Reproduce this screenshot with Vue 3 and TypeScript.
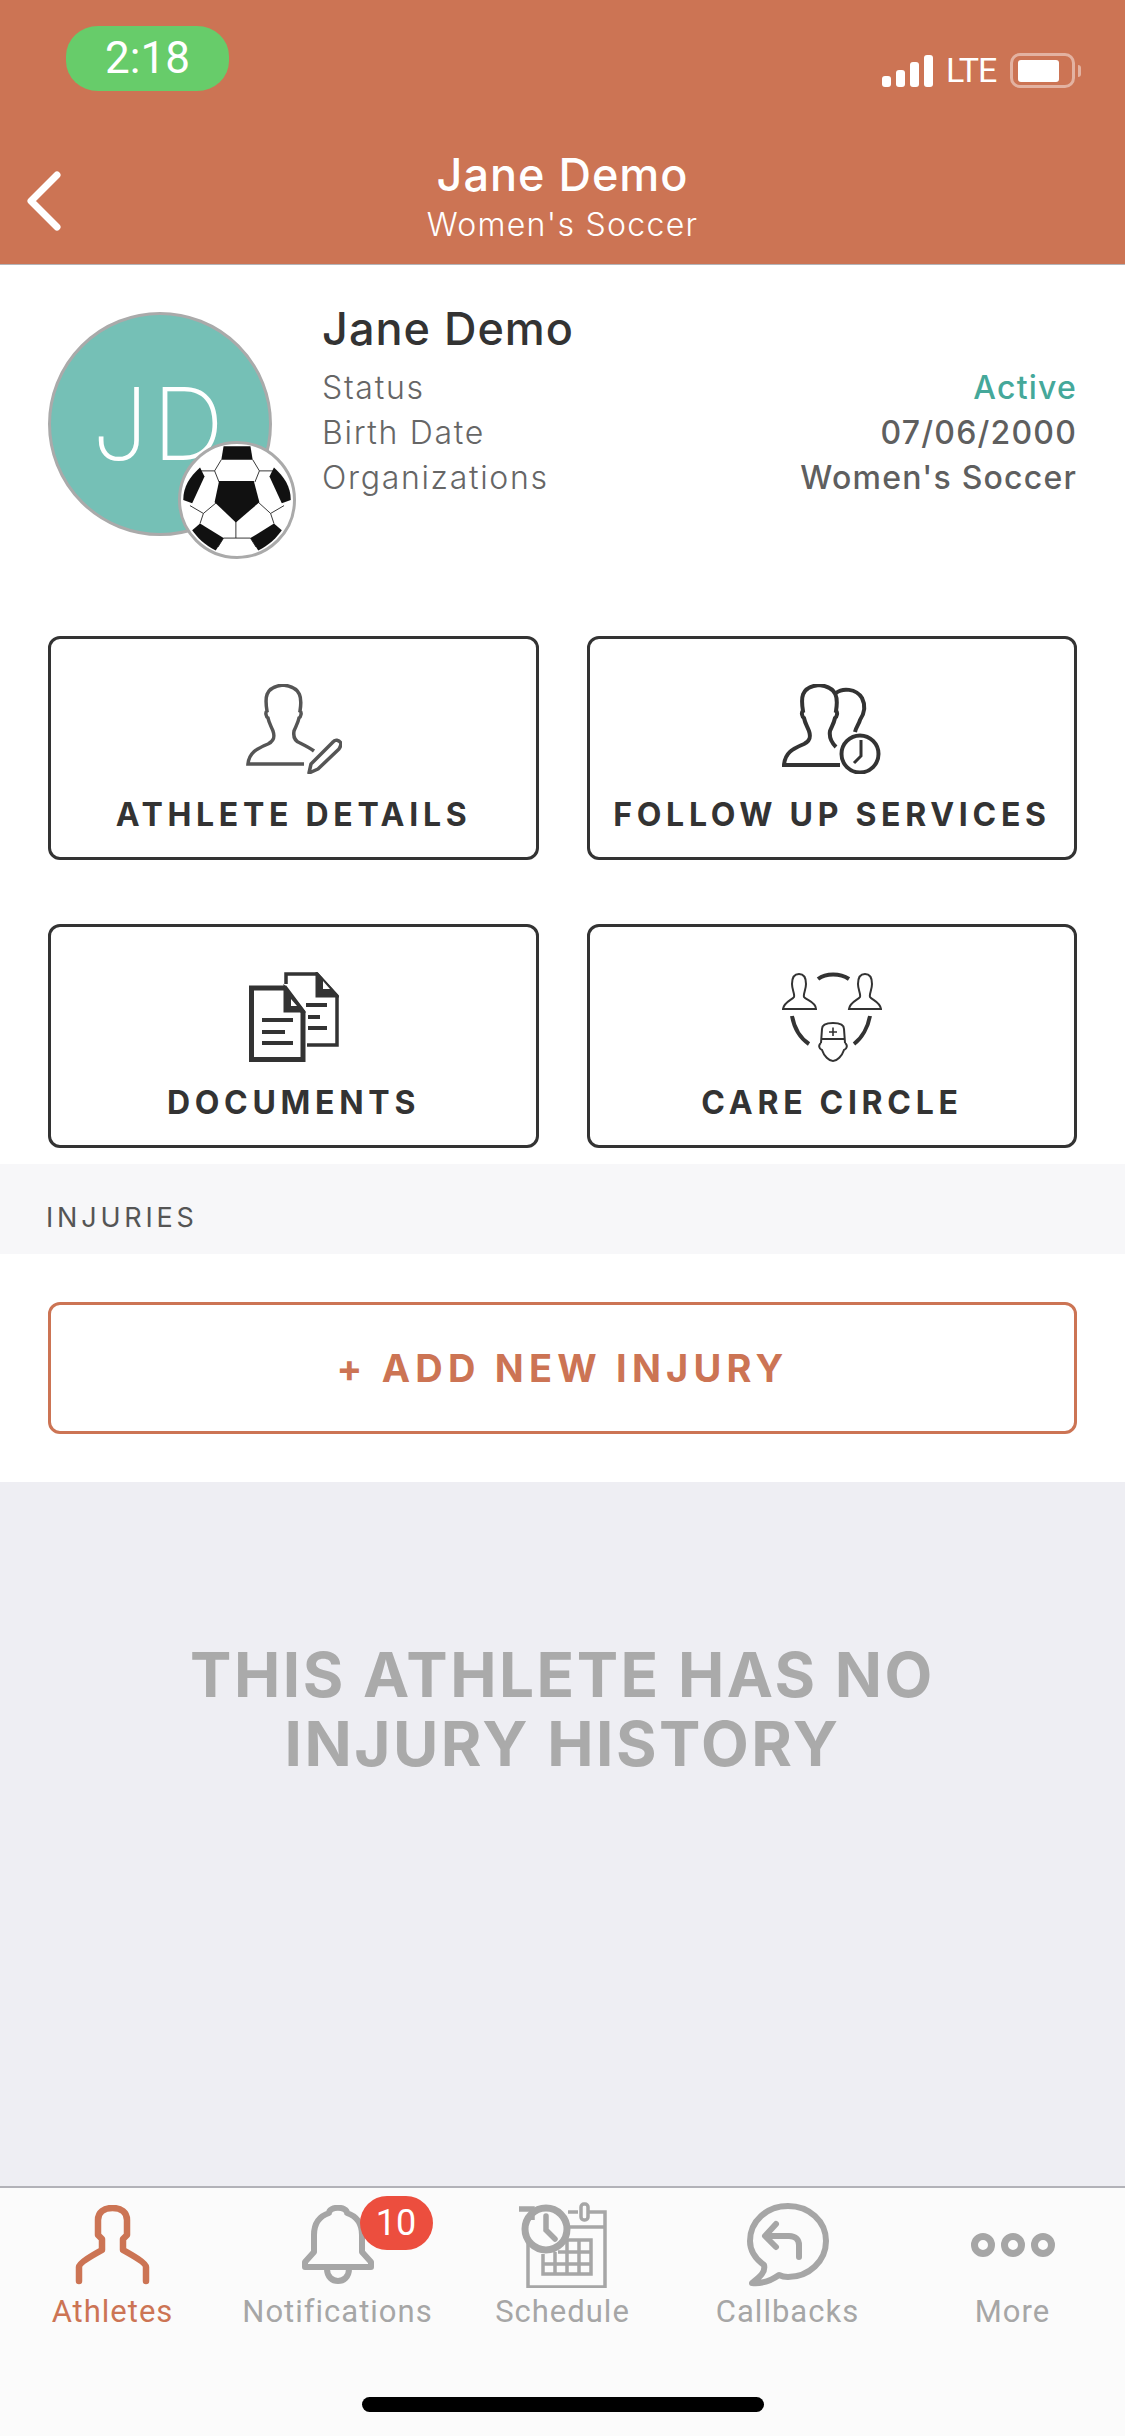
<script setup lang="ts">
type Row = {
  label: string;
  value: string;
  active?: boolean;
};

const rows: Row[] = [
  { label: 'Status', value: 'Active', active: true },
  { label: 'Birth Date', value: '07/06/2000' },
  { label: 'Organizations', value: "Women's Soccer" },
];
</script>

<template>
  <div class="screen">
    <header class="header">
      <div class="status-bar">
        <div class="pill">2:18</div>
        <div class="status-right">
          <div class="signal">
            <span class="s1"></span>
            <span class="s2"></span>
            <span class="s3"></span>
            <span class="s4"></span>
          </div>
          <span class="lte">LTE</span>
          <div class="battery"><span></span></div>
          <div class="nub"></div>
        </div>
      </div>
      <div class="nav">
        <svg class="back" width="34" height="60" viewBox="0 0 34 60" fill="none">
          <path d="M30 4L4 30L30 56" stroke="#fff" stroke-width="7" stroke-linecap="round" stroke-linejoin="round" />
        </svg>
        <div class="nav-title">
          <div class="nav-name">Jane Demo</div>
          <div class="nav-sub">Women's Soccer</div>
        </div>
      </div>
    </header>

    <section class="profile">
      <div class="avatar">
        JD
        <div class="ball">
          <svg width="112" height="112" viewBox="0 0 100 100" fill="none">
            <g stroke="#222" stroke-width="0.8">
              <path d="M36 14L30 24L34 34M64 14L70 24L66 34M30 24L17 24M70 24L83 24M32 52L20 62L17 71M69 52L80 62L83 71M49 67V84M38 84L49 84L62 84M20 62L8 55M80 62L92 55M38 84L33 92M62 84L67 92" />
            </g>
            <g fill="#111">
              <path d="M34 33H65L70 52L49 70L30 52Z" />
              <path d="M38 2H62L64 14H36Z" />
              <path d="M17 21L21 29L10 53L2 50C2 38 8 29 17 21Z" />
              <path d="M83 21L79 29L90 53L98 50C98 38 92 29 83 21Z" />
              <path d="M17 71L38 84L31 95C22 91 14 83 10 77Z" />
              <path d="M83 71L62 84L69 95C78 91 86 83 90 77Z" />
            </g>
          </svg>
        </div>
      </div>
      <div class="info">
        <div class="name">Jane Demo</div>
        <div v-for="row in rows" :key="row.label" class="info-row">
          <span class="info-label">{{ row.label }}</span>
          <span class="info-value" :class="{ active: row.active }">{{ row.value }}</span>
        </div>
      </div>
    </section>

    <section class="cards">
      <div class="card">
        <svg class="card-icon" width="96" height="90" viewBox="0 0 96 90" fill="none" stroke="#555" stroke-width="3.5">
          <path d="M58 80H2C3 69 10 65 22 60C28 57 29 53 27 47C25 42 23 39 22 34C20 33 19 28 21 27C19 15 18 3 37 1C56 3 56 15 54 27C56 28 55 33 53 34C52 39 50 42 48 47C47 53 49 57 54 59C60 62 64 64 68 67" />
          <path d="M87 58C89 55 93 56 95 59C95 62 94 63 93 65L72 85L63 89L65 80Z" stroke-linejoin="round" />
        </svg>
        <div class="card-label">ATHLETE DETAILS</div>
      </div>
      <div class="card">
        <svg class="card-icon" width="100" height="90" viewBox="0 0 100 90" fill="none" stroke="#333" stroke-width="4">
          <path d="M58 81H2C3 69 10 65 22 60C28 57 29 53 27 47C25 42 23 39 22 34C20 33 19 28 21 27C19 15 18 3 37 1C56 3 56 15 54 27C56 28 55 33 53 34C52 39 50 42 48 47C47 53 49 58 54 63" />
          <path d="M54 9C60 4 74 4 80 14C84 22 82 30 78 36C77 40 74 43 73 48" />
          <circle cx="78" cy="70" r="18.5" />
          <path d="M79 56V72L72 79" stroke-width="3" />
        </svg>
        <div class="card-label">FOLLOW UP SERVICES</div>
      </div>
      <div class="card">
        <svg class="card-icon" width="90" height="90" viewBox="0 0 90 90" fill="none" stroke="#333">
          <path d="M37 12V2H68L88 24V73H58" stroke-width="3.5" />
          <path d="M2.5 16H36L54 40V87.5H2.5Z" stroke-width="5" fill="#fff" />
          <path d="M36 16V39H54Z" fill="#333" stroke-width="3" />
          <path d="M68 2V24H88Z" fill="#333" stroke-width="3" />
          <path d="M42 27V34H48ZM74 9V17H81Z" fill="#fff" stroke="none" />
          <path d="M13 48H44M13 60H36M13 71H44" stroke-width="4" />
          <path d="M57 33H78M59 45H71M59 56H78" stroke-width="4" />
        </svg>
        <div class="card-label">DOCUMENTS</div>
      </div>
      <div class="card">
        <svg class="card-icon" width="100" height="90" viewBox="0 0 100 90" fill="none" stroke="#333" stroke-width="2">
          <path d="M1 37H34C34 30 24 28 22 25C21 22 24 18 24 12C24 5 21 2 17 2C13 2 10 5 10 12C10 18 13 22 12 25C10 28 2 30 1 37Z" />
          <path d="M67 37H99C98 30 90 28 88 25C87 22 90 18 90 12C90 5 87 2 83 2C79 2 76 5 76 12C76 18 79 22 78 25C76 28 68 30 67 37Z" />
          <path d="M36 7C44 1 58 1 67 7M10 44C12 55 18 66 27 72M88 44C86 55 80 66 72 72" stroke-width="4" />
          <path d="M39 71L40 57C40 53 44 51 51 51C58 51 62 53 62 57L63 71M40 67H62" />
          <path d="M39 71C36 73 37 77 40 78C42 84 47 89 51 89C55 89 60 84 62 78C65 77 66 73 63 71" />
          <path d="M51 55.5V64M47 60H55" stroke-width="1.6" />
        </svg>
        <div class="card-label">CARE CIRCLE</div>
      </div>
    </section>

    <div class="band">INJURIES</div>

    <section class="add-wrap">
      <div class="add-button">+ ADD NEW INJURY</div>
    </section>

    <section class="empty">
      <div class="empty-text">THIS ATHLETE HAS NO<br />INJURY HISTORY</div>
    </section>

    <nav class="tabs">
      <div class="tab current">
        <div class="tab-icon">
          <svg width="75" height="80" viewBox="0 0 75 80" fill="none" stroke="#cc7454" stroke-width="6.5" stroke-linecap="round" stroke-linejoin="round">
            <path d="M4 76V62C4 58 18 50 27 45V34L23 30V15C23 7 29 3 37.5 3C46 3 52 7 52 15V30L48 34V45C57 50 71 58 71 62V76" />
          </svg>
        </div>
        <span>Athletes</span>
      </div>
      <div class="tab">
        <div class="tab-icon">
          <svg width="72" height="80" viewBox="0 0 72 80" fill="none" stroke="#a6a6a6" stroke-width="6" stroke-linejoin="round">
            <path d="M3 62V57L12 47V30C12 18 18 11 27 8C27 1 45 1 45 8C54 11 60 18 60 30V47L69 57V62Z" />
            <path d="M25 64C25 80 47 80 47 64" />
          </svg>
          <div class="badge">10</div>
        </div>
        <span>Notifications</span>
      </div>
      <div class="tab">
        <div class="tab-icon">
          <svg width="90" height="86" viewBox="0 0 90 86" fill="none" stroke="#a6a6a6" stroke-width="3.5">
            <path d="M10 38V85H87V10H70M50 10H60M50 25H87" />
            <rect x="63" y="2" width="7" height="16" rx="3" />
            <path d="M40 38H73V72H25V52M25 62H73M40 50H73M37 50V72M49 38V72M61 38V72" />
            <circle cx="28" cy="27" r="21" fill="#fbfbfb" stroke-width="7" />
            <path d="M28 14V28L37 37" stroke-width="5.5" stroke-linecap="round" />
            <path d="M1 7H14V18" stroke-width="5.5" />
          </svg>
        </div>
        <span>Schedule</span>
      </div>
      <div class="tab">
        <div class="tab-icon">
          <svg width="82" height="84" viewBox="0 0 82 84" fill="none" stroke="#a6a6a6" stroke-width="6" stroke-linecap="round" stroke-linejoin="round">
            <path d="M17 62C6 54 3 45 3 38C3 18 20 3 41 3C62 3 79 18 79 38C79 58 62 74 41 74C37 74 34 73 32 72C25 77 16 81 5 80C11 75 19 70 17 62Z" />
            <path d="M29 21L18 33L29 44M20 33H42C49 33 52 37 52 42V54" />
          </svg>
        </div>
        <span>Callbacks</span>
      </div>
      <div class="tab">
        <div class="tab-icon">
          <svg width="86" height="26" viewBox="0 0 86 26" fill="none" stroke="#a6a6a6" stroke-width="7">
            <circle cx="13" cy="13" r="8.5" />
            <circle cx="43" cy="13" r="8.5" />
            <circle cx="73" cy="13" r="8.5" />
          </svg>
        </div>
        <span>More</span>
      </div>
    </nav>
    <div class="home-bar"></div>
  </div>
</template>

<style>
body {
  background: #fff;
}
</style>

<style scoped>
.screen {
  position: relative;
  display: flex;
  flex-direction: column;
  width: 1125px;
  height: 2436px;
  overflow: hidden;
  background: #fff;
  font-family: Inter, 'Noto Sans', sans-serif;
  color: #333;
}

.header {
  flex: none;
  height: 265px;
  background: #cc7454;
  border-bottom: 1px solid #b4b4b8;
  box-sizing: border-box;
  color: #fff;
}

.status-bar {
  display: flex;
  justify-content: space-between;
  height: 150px;
  padding: 26px 44px 0 66px;
  box-sizing: border-box;
}

.pill {
  width: 163px;
  height: 65px;
  border-radius: 32px / 30px;
  background: #67cc6a;
  font-family: Roboto, sans-serif;
  font-size: 44px;
  line-height: 65px;
  text-align: center;
}

.status-right {
  display: flex;
  align-items: center;
  height: 35px;
  margin-top: 27px;
}

.signal {
  display: flex;
  align-items: flex-end;
  gap: 5px;
  height: 32px;
}

.signal span {
  width: 9px;
  border-radius: 3px;
  background: #fff;
}

.s1 {
  height: 11px;
}

.s2 {
  height: 17px;
}

.s3 {
  height: 25px;
}

.s4 {
  height: 32px;
}

.lte {
  width: 50px;
  margin-left: 13px;
  font-family: Roboto, sans-serif;
  font-size: 34px;
  line-height: 35px;
  letter-spacing: -1px;
}

.battery {
  display: flex;
  align-items: center;
  justify-content: center;
  width: 65px;
  height: 35px;
  margin-left: 14px;
  border: 3px solid rgba(255, 255, 255, 0.45);
  border-radius: 10px;
  box-sizing: border-box;
}

.battery span {
  width: 41px;
  height: 22px;
  margin-right: 8px;
  border-radius: 3px;
  background: #fff;
}

.nub {
  width: 3px;
  height: 12px;
  margin-left: 3px;
  border-radius: 0 3px 3px 0;
  background: rgba(255, 255, 255, 0.45);
}

.nav {
  display: grid;
  grid-template-columns: 1fr auto 1fr;
}

.back {
  margin: 21px 0 0 27px;
}

.nav-title {
  text-align: center;
}

.nav-name {
  font-size: 45px;
  line-height: 50px;
  font-weight: 500;
  letter-spacing: 1px;
}

.nav-sub {
  margin-top: 5px;
  font-size: 32px;
  line-height: 40px;
  font-weight: 300;
  letter-spacing: 1.3px;
}

.profile {
  flex: none;
  display: flex;
  height: 371px;
  padding: 47px 48px 0;
  box-sizing: border-box;
}

.avatar {
  position: relative;
  flex: none;
  width: 224px;
  height: 224px;
  border: 3px solid #aaa;
  border-radius: 50%;
  box-sizing: border-box;
  background: #75c0b6;
  color: #fff;
  font-size: 100px;
  font-weight: 200;
  line-height: 218px;
  text-align: center;
  letter-spacing: 4px;
}

.ball {
  position: absolute;
  left: 127px;
  top: 126px;
  display: flex;
  align-items: center;
  justify-content: center;
  width: 118px;
  height: 118px;
  border: 3px solid #aaa;
  border-radius: 50%;
  box-sizing: border-box;
  background: #fff;
}

.info {
  flex: 1;
  margin: -8px 0 0 50px;
}

.name {
  margin-bottom: 11px;
  font-size: 45px;
  line-height: 50px;
  font-weight: 500;
  letter-spacing: 1px;
  color: #333;
}

.info-row {
  display: flex;
  justify-content: space-between;
  font-size: 32px;
  line-height: 45px;
  color: #666;
}

.info-label {
  font-weight: 300;
  letter-spacing: 1.7px;
}

.info-value {
  font-weight: 500;
  letter-spacing: 1.2px;
  color: #5f5f5f;
}

.info-value.active {
  color: #45a89a;
}

.cards {
  flex: none;
  display: grid;
  grid-template-columns: 491px 490px;
  gap: 64px 48px;
  padding: 0 48px 16px;
}

.card {
  display: flex;
  flex-direction: column;
  align-items: center;
  height: 224px;
  padding-top: 45px;
  border: 3px solid #333;
  border-radius: 12px;
  box-sizing: border-box;
}

.card-label {
  margin-top: 21px;
  font-size: 32px;
  line-height: 40px;
  font-weight: 700;
  letter-spacing: 4.7px;
  color: #333;
}

.band {
  flex: none;
  height: 90px;
  padding: 18px 0 0 46px;
  box-sizing: border-box;
  background: #f7f7f9;
  font-size: 27px;
  line-height: 72px;
  letter-spacing: 3.8px;
  color: #555;
}

.add-wrap {
  flex: none;
  padding: 48px;
}

.add-button {
  height: 132px;
  border: 3px solid #cc7454;
  border-radius: 12px;
  box-sizing: border-box;
  font-size: 38px;
  line-height: 126px;
  font-weight: 700;
  letter-spacing: 5.2px;
  text-align: center;
  color: #cc7454;
}

.empty {
  flex: 1;
  padding-top: 158px;
  background: #eeeef3;
}

.empty-text {
  font-size: 62px;
  line-height: 69px;
  font-weight: 700;
  letter-spacing: 2.5px;
  text-align: center;
  color: #aaa;
}

.tabs {
  flex: none;
  display: grid;
  grid-template-columns: repeat(5, 225px);
  height: 250px;
  padding-top: 14px;
  border-top: 2px solid #b2b2b8;
  box-sizing: border-box;
  background: #fbfbfb;
}

.tab {
  display: flex;
  flex-direction: column;
  align-items: center;
  font-family: Roboto, sans-serif;
  font-size: 31px;
  line-height: 32px;
  letter-spacing: 1px;
  color: #a6a6a6;
}

.tab.current {
  color: #cc7454;
}

.tab-icon {
  position: relative;
  display: flex;
  align-items: center;
  justify-content: center;
  height: 86px;
  margin-bottom: 8px;
}

.badge {
  position: absolute;
  left: 58px;
  top: -6px;
  width: 73px;
  height: 54px;
  border-radius: 27px;
  background: #ec4e3e;
  color: #fff;
  font-size: 36px;
  line-height: 54px;
  text-align: center;
  letter-spacing: 0;
}

.home-bar {
  position: absolute;
  left: 362px;
  bottom: 24px;
  width: 402px;
  height: 15px;
  border-radius: 8px;
  background: #000;
}
</style>
